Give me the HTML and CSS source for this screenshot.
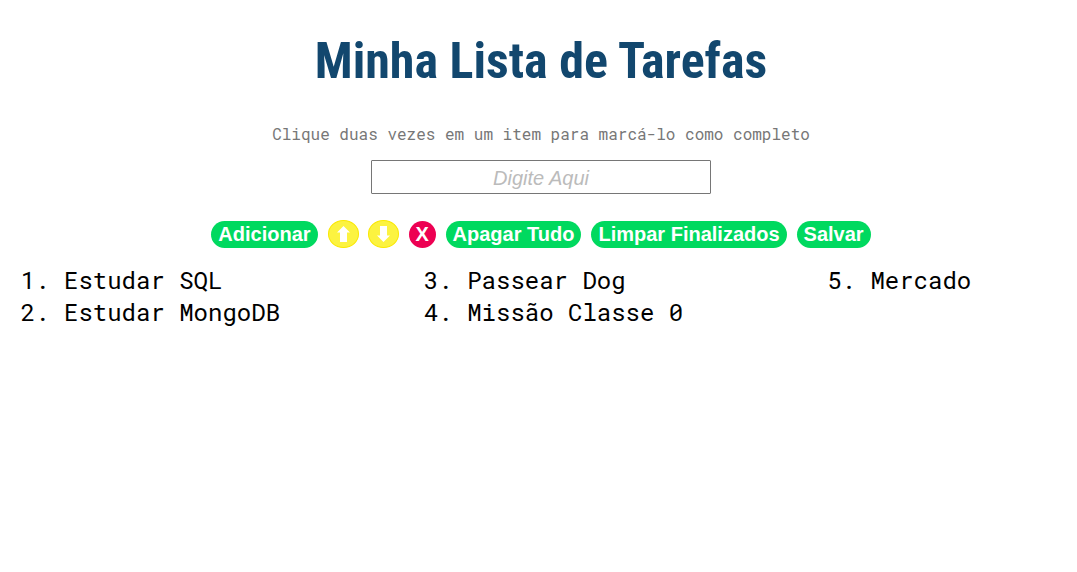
FILE: index.html
```html
<!DOCTYPE html>
<html lang="pt-BR">
<head>
<meta charset="utf-8">
<title>Minha Lista de Tarefas</title>
<link rel="stylesheet" href="styles.css">
</head>
<body>
<header><h1 class="title">Minha Lista de Tarefas</h1></header>
<main>
<p class="hint">Clique duas vezes em um item para marcá-lo como completo</p>
<div class="entry"><input class="task-input" type="text" placeholder="Digite Aqui" aria-label="Nova tarefa"></div>
<div class="actions">
<button class="btn" type="button">Adicionar</button>
<div class="moves">
<button class="btn move" type="button" aria-label="Mover para cima"><svg class="arrow" viewBox="0 0 17 18"><path d="M8.5 1 15 7.5H12V17H5V7.5H2Z"/></svg></button>
<button class="btn move" type="button" aria-label="Mover para baixo"><svg class="arrow" viewBox="0 0 17 18"><path d="M5 1H12V10.5H15L8.5 17 2 10.5H5Z"/></svg></button>
</div>
<button class="btn remove" type="button">X</button>
<button class="btn" type="button">Apagar Tudo</button>
<button class="btn" type="button">Limpar Finalizados</button>
<button class="btn" type="button">Salvar</button>
</div>
<ol class="tasks">
<li>Estudar SQL</li>
<li>Estudar MongoDB</li>
<li>Passear Dog</li>
<li>Missão Classe 0</li>
<li>Mercado</li>
</ol>
</main>
</body>
</html>
```
FILE: styles.css
```css
body {
  margin: 8px 3px 8px 8px;
  background: #fff;
  font-family: "Roboto Mono", "DejaVu Sans Mono", monospace;
}
.title {
  margin: 24px 0 33px;
  color: #12476e;
  font: 700 50px/58px "Roboto Condensed", Roboto, sans-serif;
  text-align: center;
}
.hint {
  margin: 0 0 16px;
  color: #777;
  font-size: 16px;
  line-height: 21px;
  text-align: center;
}
.entry {
  display: flex;
  justify-content: center;
}
.task-input {
  box-sizing: border-box;
  width: 340px;
  height: 34px;
  padding: 2px 2px 0;
  border: 1px solid #767676;
  border-radius: 1px;
  font: 20px "Liberation Sans", Arial, sans-serif;
  text-align: center;
}
.task-input::placeholder {
  color: #bbb;
  font-style: italic;
}
.actions {
  display: flex;
  justify-content: center;
  align-items: flex-end;
  gap: 10px;
  margin: 26px 0 16px;
}
.moves {
  display: flex;
  gap: 9px;
}
.btn {
  height: 27px;
  padding: 0 7px;
  border: 0;
  border-radius: 14px;
  background: #00d95f;
  color: #fff;
  font: bold 20px/27px "Liberation Sans", Arial, sans-serif;
}
.move {
  box-sizing: border-box;
  width: 31px;
  height: 28px;
  padding: 0 6px;
  border: 1px solid #fae800;
  border-radius: 50%;
  background: #fcf340;
}
.remove {
  width: 27px;
  padding: 0;
  background: #ed0052;
}
.arrow {
  display: block;
  width: 17px;
  height: 18px;
  fill: #fff;
}
.tasks {
  display: grid;
  grid-template-rows: repeat(2, auto);
  grid-template-columns: 2fr 2fr 1fr;
  grid-auto-flow: column;
  margin: 0;
  padding: 0 2px 0 56px;
  font-size: 24px;
  line-height: 32px;
}
```
